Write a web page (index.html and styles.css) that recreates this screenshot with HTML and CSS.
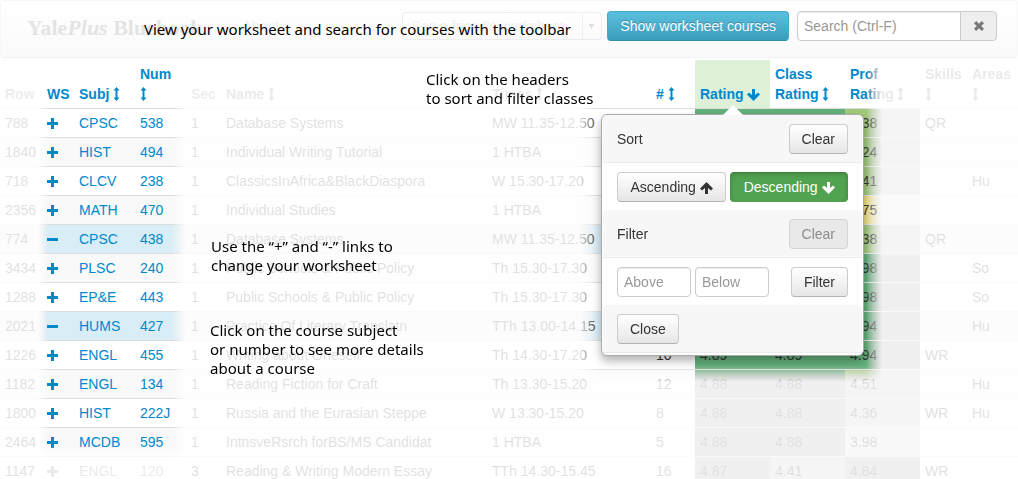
FILE: index.html
```html
<!DOCTYPE html>
<html lang="en">
<head>
<meta charset="utf-8">
<title>YalePlus Bluebook</title>
<link rel="stylesheet" href="styles.css">
</head>
<body>
<svg class="defs" aria-hidden="true">
  <symbol id="sort" viewBox="0 0 7 14"><path d="M3.500 0L6.500 3.500H4.500V10.500H6.500L3.500 14L.5 10.500H2.500V3.500H.5Z"/></symbol>
  <symbol id="down" viewBox="0 0 13 12"><path d="M5 0H8V6L11 3.500L13 5.500L6.500 12L0 5.500L2 3.500L5 6Z"/></symbol>
  <symbol id="up" viewBox="0 0 13 12"><path d="M5 12H8V6L11 8.500L13 6.500L6.500 0L0 6.500L2 8.500L5 6Z"/></symbol>
  <symbol id="plus" viewBox="0 0 11 11"><path d="M4 0H7V4H11V7H7V11H4V7H0V4H4Z"/></symbol>
  <symbol id="minus" viewBox="0 0 11 11"><path d="M0 4H11V7H0Z"/></symbol>
  <symbol id="cross" viewBox="0 0 10 10"><path d="M2.200 0L5 2.800L7.800 0L10 2.200L7.200 5L10 7.800L7.800 10L5 7.200L2.200 10L0 7.800L2.800 5L0 2.200Z"/></symbol>
</svg>
<header class="toolbar">
  <a class="brand" href="#">Yale<em>Plus</em> Bluebook</a>
  <a class="about" href="#">About</a>
  <select class="friend" aria-label="Friend's worksheet"><option>See a friend's worksheet</option></select>
  <button class="btn btn-info" type="button">Show worksheet courses</button>
  <div class="search">
    <input class="field" type="text" placeholder="Search (Ctrl-F)" aria-label="Search">
    <button class="btn btn-clear" type="button" aria-label="Clear search"><svg class="i-cross"><use href="#cross"/></svg></button>
  </div>
  <p class="note note-toolbar">View your worksheet and search for courses with the toolbar</p>
</header>
<main class="courses">
<table class="list">
  <colgroup><col class="c-row"><col class="c-ws"><col class="c-subj"><col class="c-num"><col class="c-sec"><col class="c-name"><col class="c-time"><col class="c-count"><col class="c-rate"><col class="c-rate"><col class="c-rate"><col class="c-skill"><col></colgroup>
  <thead><tr>
    <th>Row</th><th><a href="#">WS</a></th>
    <th><a href="#">Subj <svg class="i-sort"><use href="#sort"/></svg></a></th>
    <th><a href="#">Num <svg class="i-sort"><use href="#sort"/></svg></a></th>
    <th>Sec</th>
    <th><a href="#">Name <svg class="i-sort"><use href="#sort"/></svg></a></th>
    <th><a href="#">Times <svg class="i-sort"><use href="#sort"/></svg></a></th>
    <th><a href="#"># <svg class="i-sort"><use href="#sort"/></svg></a></th>
    <th class="sorted"><a href="#">Rating <svg class="i-arrow"><use href="#down"/></svg></a></th>
    <th><a href="#">Class Rating <svg class="i-sort"><use href="#sort"/></svg></a></th>
    <th><a href="#">Prof Rating <svg class="i-sort"><use href="#sort"/></svg></a></th>
    <th><a href="#">Skills <svg class="i-sort"><use href="#sort"/></svg></a></th>
    <th><a href="#">Areas <svg class="i-sort"><use href="#sort"/></svg></a></th>
  </tr></thead>
  <tbody>
  <tr><td>788</td><td><a href="#" aria-label="Add"><svg class="i-ws"><use href="#plus"/></svg></a></td><td><a href="#">CPSC</a></td><td><a href="#">538</a></td><td>1</td><td>Database Systems</td><td>MW 11.35-12.50</td><td></td><td class="g5"></td><td class="g5"></td><td class="g3">4.38</td><td>QR</td><td></td></tr>
  <tr><td>1840</td><td><a href="#" aria-label="Add"><svg class="i-ws"><use href="#plus"/></svg></a></td><td><a href="#">HIST</a></td><td><a href="#">494</a></td><td>1</td><td>Individual Writing Tutorial</td><td>1 HTBA</td><td></td><td class="g5"></td><td class="g5"></td><td class="g3">4.24</td><td></td><td></td></tr>
  <tr><td>718</td><td><a href="#" aria-label="Add"><svg class="i-ws"><use href="#plus"/></svg></a></td><td><a href="#">CLCV</a></td><td><a href="#">238</a></td><td>1</td><td>ClassicsInAfrica&amp;BlackDiaspora</td><td>W 15.30-17.20</td><td></td><td class="g5"></td><td class="g5"></td><td class="g3">4.41</td><td></td><td>Hu</td></tr>
  <tr><td>2356</td><td><a href="#" aria-label="Add"><svg class="i-ws"><use href="#plus"/></svg></a></td><td><a href="#">MATH</a></td><td><a href="#">470</a></td><td>1</td><td>Individual Studies</td><td>1 HTBA</td><td></td><td class="g5"></td><td class="g5"></td><td class="g1">3.75</td><td></td><td></td></tr>
  <tr class="added"><td>774</td><td><a href="#" aria-label="Remove"><svg class="i-ws"><use href="#minus"/></svg></a></td><td><a href="#">CPSC</a></td><td><a href="#">438</a></td><td>1</td><td>Database Systems</td><td>MW 11.35-12.50</td><td></td><td class="g5"></td><td class="g5"></td><td class="g3">4.38</td><td>QR</td><td></td></tr>
  <tr><td>3434</td><td><a href="#" aria-label="Add"><svg class="i-ws"><use href="#plus"/></svg></a></td><td><a href="#">PLSC</a></td><td><a href="#">240</a></td><td>1</td><td>Public Schools &amp; Public Policy</td><td>Th 15.30-17.30</td><td></td><td class="g5"></td><td class="g5"></td><td class="g5">4.98</td><td></td><td>So</td></tr>
  <tr><td>1288</td><td><a href="#" aria-label="Add"><svg class="i-ws"><use href="#plus"/></svg></a></td><td><a href="#">EP&amp;E</a></td><td><a href="#">443</a></td><td>1</td><td>Public Schools &amp; Public Policy</td><td>Th 15.30-17.30</td><td></td><td class="g5"></td><td class="g5"></td><td class="g5">4.98</td><td></td><td>So</td></tr>
  <tr class="added"><td>2021</td><td><a href="#" aria-label="Remove"><svg class="i-ws"><use href="#minus"/></svg></a></td><td><a href="#">HUMS</a></td><td><a href="#">427</a></td><td>1</td><td>Practice Of Literary Translatn</td><td>TTh 13.00-14.15</td><td></td><td class="g5"></td><td class="g5"></td><td class="g5">4.94</td><td></td><td>Hu</td></tr>
  <tr><td>1226</td><td><a href="#" aria-label="Add"><svg class="i-ws"><use href="#plus"/></svg></a></td><td><a href="#">ENGL</a></td><td><a href="#">455</a></td><td>1</td><td>Writing about Oneself</td><td>Th 14.30-17.20</td><td>10</td><td class="g5">4.89</td><td class="g5">4.89</td><td class="g5">4.94</td><td>WR</td><td></td></tr>
  <tr><td>1182</td><td><a href="#" aria-label="Add"><svg class="i-ws"><use href="#plus"/></svg></a></td><td><a href="#">ENGL</a></td><td><a href="#">134</a></td><td>1</td><td>Reading Fiction for Craft</td><td>Th 13.30-15.20</td><td>12</td><td class="g5">4.88</td><td class="g5">4.88</td><td class="g4">4.51</td><td></td><td>Hu</td></tr>
  <tr><td>1800</td><td><a href="#" aria-label="Add"><svg class="i-ws"><use href="#plus"/></svg></a></td><td><a href="#">HIST</a></td><td><a href="#">222J</a></td><td>1</td><td>Russia and the Eurasian Steppe</td><td>W 13.30-15.20</td><td>8</td><td class="g5">4.88</td><td class="g5">4.88</td><td class="g3">4.36</td><td>WR</td><td>Hu</td></tr>
  <tr><td>2464</td><td><a href="#" aria-label="Add"><svg class="i-ws"><use href="#plus"/></svg></a></td><td><a href="#">MCDB</a></td><td><a href="#">595</a></td><td>1</td><td>IntnsveRsrch forBS/MS Candidat</td><td>1 HTBA</td><td>5</td><td class="g5">4.88</td><td class="g5">4.88</td><td class="g2">3.98</td><td></td><td></td></tr>
  <tr><td>1147</td><td><a href="#" aria-label="Add"><svg class="i-ws"><use href="#plus"/></svg></a></td><td><a href="#">ENGL</a></td><td><a href="#">120</a></td><td>3</td><td>Reading &amp; Writing Modern Essay</td><td>TTh 14.30-15.45</td><td>16</td><td class="g5">4.87</td><td class="g3">4.41</td><td class="g5">4.84</td><td>WR</td><td></td></tr>
  </tbody>
</table>
<div class="veil veil-left"></div>
<div class="veil veil-right"></div>
<p class="note note-headers">Click on the headers<br>to sort and filter classes</p>
<p class="note note-links">Use the “+” and “-” links to<br>change your worksheet</p>
<p class="note note-details">Click on the course subject<br>or number to see more details<br>about a course</p>
<form class="popover">
  <div class="band"><span>Sort</span><button class="btn" type="button">Clear</button></div>
  <div class="line">
    <button class="btn" type="button">Ascending <svg class="i-arrow"><use href="#up"/></svg></button>
    <button class="btn btn-success" type="button">Descending <svg class="i-arrow"><use href="#down"/></svg></button>
  </div>
  <div class="band"><span>Filter</span><button class="btn" type="button" disabled>Clear</button></div>
  <div class="line">
    <input class="field" type="text" placeholder="Above" aria-label="Above">
    <input class="field" type="text" placeholder="Below" aria-label="Below">
    <button class="btn btn-end" type="button">Filter</button>
  </div>
  <div class="band"><button class="btn" type="button">Close</button></div>
</form>
</main>
</body>
</html>
```
FILE: styles.css
```css
* { box-sizing: border-box; }
body {
  margin: 0;
  height: 100vh;
  overflow: hidden;
  background: #fff;
  color: #333;
  font: 14px/20px "Liberation Sans", Arial, sans-serif;
}
a { color: #08c; text-decoration: none; }
svg { fill: currentColor; }
button, input, select { font: inherit; color: inherit; }
.defs { position: absolute; width: 0; height: 0; }
.i-sort { width: 7px; height: 14px; vertical-align: -2px; }
.i-arrow { width: 13px; height: 12px; vertical-align: -2px; }
.i-ws { width: 11px; height: 11px; vertical-align: -1px; }
.i-cross { width: 10px; height: 10px; }

.toolbar {
  position: relative;
  display: flex;
  align-items: center;
  height: 58px;
  padding: 0 20px 6px 26px;
  border: 1px solid #f7f7f7;
  border-bottom-color: #f1f1f1;
  border-radius: 4px;
  background: linear-gradient(#fff, #fafafa);
}
.brand {
  margin-right: 40px;
  padding-top: 4px;
  color: #e4e4e4;
  font: bold 22px/26px "Liberation Serif", serif;
}
.about { color: #f0f0f0; }
.friend {
  width: 200px;
  height: 28px;
  margin: 0 5px 0 auto;
  padding: 0 8px;
  appearance: none;
  border: 1px solid #ededed;
  border-radius: 4px;
  color: #f0f0f0;
  background:
    conic-gradient(from -30deg at 50% 100%, #e0e0e0 60deg, transparent 0) right 6px center / 8px 6px no-repeat,
    linear-gradient(#f0f0f0, #f0f0f0) right 18px top / 1px 100% no-repeat,
    linear-gradient(#fff, #fafafa);
  background:
    conic-gradient(from -30deg at 50% 100%, #e0e0e0 60deg, transparent 0) right 6px center / 7px 5px no-repeat,
    linear-gradient(#f0f0f0, #f0f0f0) right 18px top / 1px 100% no-repeat,
    linear-gradient(#fff, #fafafa);
}
.btn {
  height: 30px;
  padding: 0 12px;
  border: 1px solid #ccc;
  border-bottom-color: #b3b3b3;
  border-radius: 4px;
  background: linear-gradient(#fff, #e6e6e6);
  color: #333;
  white-space: nowrap;
}
.btn:disabled { background: #e9e9e9; border-color: #d3d3d3; color: #8c8c8c; }
.btn-info {
  margin-right: 8px;
  border-color: #46a9c7 #46a9c7 #2f8fae;
  background: linear-gradient(#5bc0de, #3a9dbc);
  color: #fff;
  text-shadow: 0 -1px 0 rgba(0, 0, 0, .25);
}
.btn-success {
  border-color: #408140 #499249 #51a351;
  background: #51a351;
  color: #fff;
  box-shadow: inset 0 2px 4px rgba(0, 0, 0, .15);
}
.field {
  height: 30px;
  min-width: 0;
  padding: 0 6px;
  border: 1px solid #ccc;
  border-radius: 4px;
  background: #fff;
  box-shadow: inset 0 1px 1px rgba(0, 0, 0, .075);
}
.field::placeholder { color: #999; opacity: 1; }
.search { display: flex; }
.search .field { width: 164px; border-radius: 4px 0 0 4px; }
.btn-clear {
  width: 37px;
  margin-left: -1px;
  border-color: #ccc;
  border-radius: 0 4px 4px 0;
  background: #eee;
  color: #777;
}

.courses { position: relative; margin-top: 2px; }
.list {
  width: 100%;
  table-layout: fixed;
  border-collapse: separate;
  border-spacing: 0;
}
.c-row { width: 42px; }
.c-ws { width: 32px; }
.c-subj { width: 61px; }
.c-num { width: 51px; }
.c-sec { width: 35px; }
.c-name { width: 266px; }
.c-time { width: 164px; }
.c-count { width: 44px; }
.c-rate { width: 75px; }
.c-skill { width: 47px; }
th {
  padding: 4px 5px;
  color: #888;
  text-align: left;
  vertical-align: bottom;
}
.sorted { background: #dff0d8; }
td {
  height: 29px;
  padding: 4px 0 4px 5px;
  border-top: 1px solid #ddd;
  white-space: nowrap;
}
tbody tr:nth-child(even) td { background-color: #f9f9f9; }
tbody tr.added td { background-color: #d9edf7; }
tbody tr td.g5 { background-color: #63b17b; }
tbody tr td.g4 { background-color: #a5cc7c; }
tbody tr td.g3 { background-color: #a1c97b; }
tbody tr td.g2 { background-color: #d3da80; }
tbody tr td.g1 { background-color: #e9df80; }

/* Dims the page, leaving a soft-edged window over the explained parts */
.veil {
  position: absolute;
  top: 0;
  bottom: 0;
  background: rgba(255, 255, 255, .85);
  backdrop-filter: grayscale(1);
  pointer-events: none;
}
.veil-left {
  left: 0;
  width: 400px;
  mask-image:
    linear-gradient(to right, #000 38px, transparent 48px, transparent 172px, #000 186px),
    linear-gradient(transparent 386px, #000 398px);
}
.veil-right {
  left: 400px;
  right: 0;
  mask-image:
    linear-gradient(to right, #000 180px, transparent 198px, transparent 466px, #000 482px),
    linear-gradient(transparent 306px, #000 322px);
}

.note {
  position: absolute;
  margin: 0;
  color: #000;
  font: 15px/19px "Noto Sans", sans-serif;
  white-space: nowrap;
}
.note-toolbar { left: 143px; top: 19px; }
.note-headers { left: 426px; top: 10px; }
.note-links { left: 211px; top: 177px; }
.note-details { left: 210px; top: 261px; }

.popover {
  position: absolute;
  left: 601px;
  top: 54px;
  width: 263px;
  padding: 0 1px 2px;
  border: 1px solid #aaa;
  border-radius: 6px;
  background: #fff;
  box-shadow: 0 5px 10px rgba(0, 0, 0, .3);
}
.popover::before {
  content: "";
  position: absolute;
  left: 121px;
  top: -10px;
  width: 20px;
  height: 10px;
  background: #fff;
  clip-path: polygon(50% 0, 100% 100%, 0 100%);
}
.band {
  display: flex;
  justify-content: space-between;
  align-items: center;
  padding: 9px 14px 8px;
  border-bottom: 1px solid #ebebeb;
  border-radius: 5px 5px 0 0;
  background: #f7f7f7;
}
.line { display: flex; gap: 4px; padding: 9px 14px 8px; }
.line .field { width: 74px; }
.line .btn { flex: auto; padding: 0 8px; }
.line .btn-end { flex: none; margin-left: auto; padding: 0 12px; }
```
